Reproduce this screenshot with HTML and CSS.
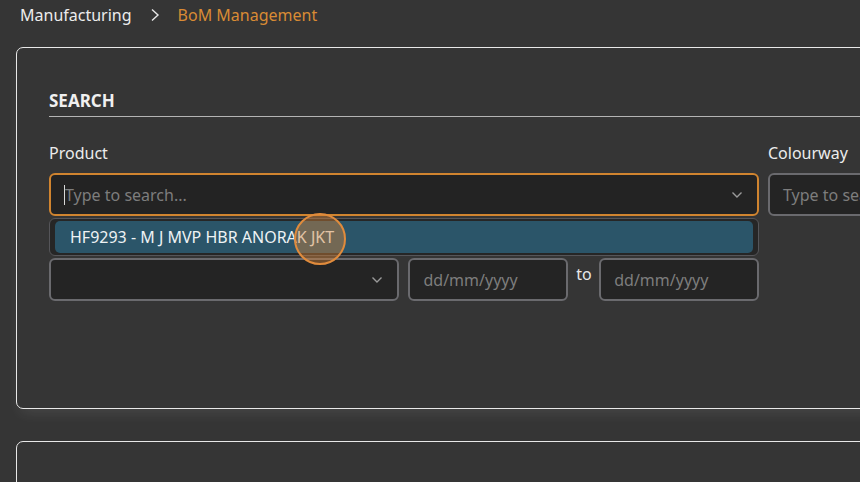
FILE: index.html
```html
<!DOCTYPE html>
<html lang="en">
<head>
<meta charset="utf-8">
<title>BoM Management</title>
<link rel="stylesheet" href="styles.css">
</head>
<body>
<nav class="breadcrumb">
  <span class="crumb">Manufacturing</span>
  <svg class="crumb-sep" width="10" height="14" viewBox="0 0 10 14"><path d="M2 1.5 L8 7 L2 12.5" fill="none" stroke="#e6e6e6" stroke-width="1.4"/></svg>
  <span class="crumb current">BoM Management</span>
</nav>

<section class="card search-card">
  <h2 class="section-title">SEARCH</h2>
  <div class="form-grid">
    <div class="field product-field">
      <label class="label">Product</label>
      <div class="input-wrap focused">
        <span class="caret"></span>
        <span class="placeholder">Type to search...</span>
        <svg class="chev" width="12" height="8" viewBox="0 0 12 8"><path d="M1.5 1.5 L6 6 L10.5 1.5" fill="none" stroke="#9a9a9a" stroke-width="1.4"/></svg>
      </div>
      <div class="dropdown">
        <div class="option">HF9293 - M J MVP HBR ANORAK JKT</div>
      </div>
      <label class="label second-label">Season</label>
      <div class="row2">
        <div class="input-wrap select">
          <svg class="chev" width="12" height="8" viewBox="0 0 12 8"><path d="M1.5 1.5 L6 6 L10.5 1.5" fill="none" stroke="#9a9a9a" stroke-width="1.4"/></svg>
        </div>
        <div class="input-wrap date"><span class="placeholder">dd/mm/yyyy</span></div>
        <span class="to">to</span>
        <div class="input-wrap date"><span class="placeholder">dd/mm/yyyy</span></div>
      </div>
    </div>
    <div class="field colour-field">
      <label class="label">Colourway</label>
      <div class="input-wrap plain"><span class="placeholder">Type to search...</span></div>
    </div>
  </div>
</section>

<section class="card second-card"></section>

<div class="cursor-ring"></div>
</body>
</html>
```

FILE: styles.css
```css
html, body {
  margin: 0;
  padding: 0;
  background: #353535;
  overflow: hidden;
  height: 482px;
  font-family: "Noto Sans", "Open Sans", sans-serif;
  color: #e6e6e6;
}

.breadcrumb {
  display: flex;
  align-items: center;
  height: 30px;
  padding-left: 20px;
  font-size: 16px;
}
.crumb { color: #ececec; }
.crumb-sep { margin: 0 18px 0 18px; }
.crumb.current { color: #d98b34; }

.card {
  margin-left: 16px;
  width: 900px;
  border: 1px solid #e8e8e8;
  border-radius: 7px;
  background: #353535;
  box-sizing: border-box;
}

.search-card {
  margin-top: 17px;
  height: 362px;
  padding: 38px 0 0 32px;
  box-shadow: 0 8px 14px -4px rgba(255,255,255,0.09);
}

.section-title {
  margin: 0;
  font-size: 17px;
  font-weight: 700;
  line-height: 30px;
  border-bottom: 1px solid #b4b4b4;
  color: #f0f0f0;
}

.form-grid {
  display: flex;
  gap: 9px;
  margin-top: 25px;
}

.field { position: relative; }
.product-field { width: 710px; }
.colour-field { width: 200px; }

.label {
  display: block;
  font-size: 16px;
  line-height: 22px;
  color: #ececec;
  margin-bottom: 9px;
}

.input-wrap {
  position: relative;
  box-sizing: border-box;
  height: 43px;
  border: 2px solid #6a6a6e;
  border-radius: 6px;
  background: #242424;
  display: flex;
  align-items: center;
  padding-left: 13px;
}
.input-wrap.focused {
  border-color: #d0842f;
  background: #232323;
}
.placeholder {
  color: #7d7d7d;
  font-size: 16px;
}
.caret {
  width: 1px;
  height: 20px;
  background: #d8d8d8;
}
.chev {
  position: absolute;
  right: 14px;
  top: 16px;
}

.dropdown {
  position: absolute;
  left: 0;
  top: 76px;
  width: 710px;
  box-sizing: border-box;
  height: 38px;
  border: 1px solid #555559;
  border-radius: 6px;
  background: #262626;
  padding: 2px 5px;
  z-index: 2;
}
.option {
  height: 32px;
  border-radius: 5px;
  background: #2b5569;
  color: #eef2f4;
  font-size: 16px;
  line-height: 32px;
  padding-left: 15px;
}

.second-label {
  margin-top: 10px;
  margin-bottom: 10px;
}

.row2 {
  display: flex;
  align-items: center;
}
.row2 .select { width: 351px; }
.row2 .date { width: 160px; margin-left: 9px; }
.row2 .to {
  margin-left: 8px;
  font-size: 16px;
  color: #e8e8e8;
  align-self: flex-start;
  margin-top: 5px;
  width: 15px;
}
.row2 .to + .date { margin-left: 8px; }

.second-card {
  margin-top: 32px;
  height: 80px;
}

.cursor-ring {
  position: absolute;
  left: 294px;
  top: 213px;
  width: 52px;
  height: 52px;
  box-sizing: border-box;
  border-radius: 50%;
  border: 2px solid #e08b3c;
  background: rgba(214, 130, 55, 0.42);
  z-index: 5;
}
```
